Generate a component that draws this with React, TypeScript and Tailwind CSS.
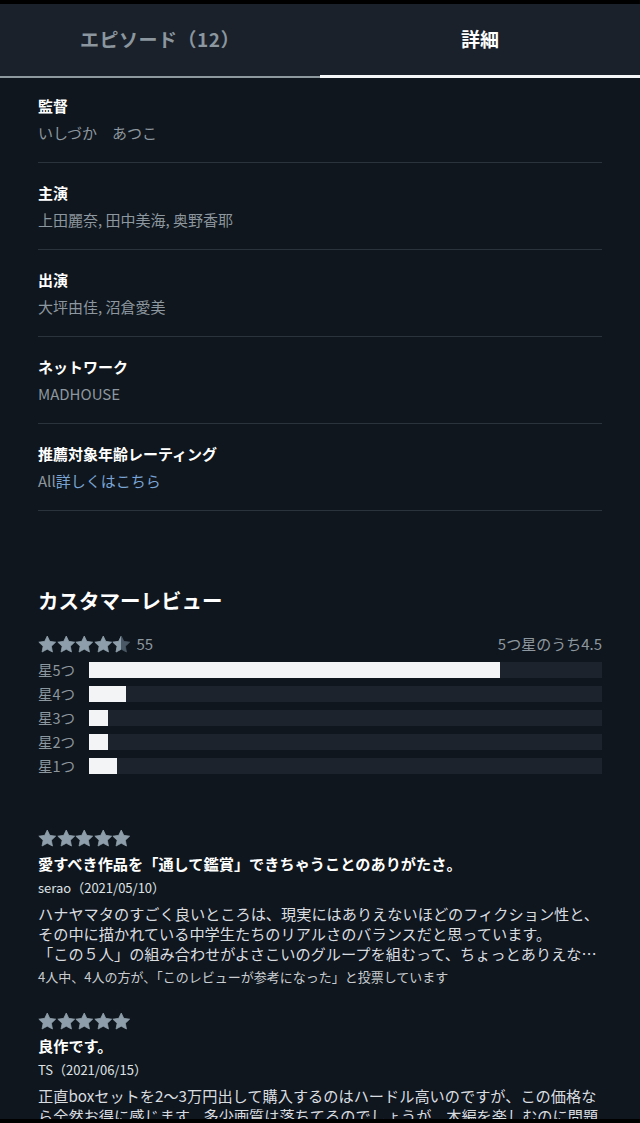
import React from "react";

const STAR =
  "M12 1.3L15.29 8.27L22.94 9.25L17.33 14.53L18.76 22.1L12 18.4L5.24 22.1L6.67 14.53L1.06 9.25L8.71 8.27Z";

function Star({ fill = "#8e9fab" }: { fill?: string }) {
  return (
    <svg viewBox="0 0 24 24" className="w-[18.5px] h-[18.5px] block" aria-hidden>
      <path d={STAR} fill={fill} stroke={fill} strokeWidth={1} strokeLinejoin="round" />
    </svg>
  );
}

function HalfStar() {
  return (
    <div className="relative w-[18.5px] h-[18.5px]">
      <Star fill="#4a5866" />
      <div className="absolute left-0 top-0 h-full w-[50%] overflow-hidden">
        <Star />
      </div>
    </div>
  );
}

function Stars({ half = false }: { half?: boolean }) {
  return (
    <div className="flex items-center">
      <Star />
      <Star />
      <Star />
      <Star />
      {half ? <HalfStar /> : <Star />}
    </div>
  );
}

const details: { label: string; value: React.ReactNode }[] = [
  { label: "監督", value: "いしづか　あつこ" },
  { label: "主演", value: "上田麗奈, 田中美海, 奥野香耶" },
  { label: "出演", value: "大坪由佳, 沼倉愛美" },
  { label: "ネットワーク", value: "MADHOUSE" },
  {
    label: "推薦対象年齢レーティング",
    value: (
      <>
        All<span className="text-[#7aa4d4]">詳しくはこちら</span>
      </>
    ),
  },
];

const bars = [
  { label: "星5つ", pct: 80.1 },
  { label: "星4つ", pct: 7.3 },
  { label: "星3つ", pct: 3.7 },
  { label: "星2つ", pct: 3.7 },
  { label: "星1つ", pct: 5.5 },
];

export default function App() {
  return (
    <div
      className="w-[640px] h-[1123px] overflow-hidden flex flex-col bg-[#0f161d]"
      style={{ fontFamily: '"Noto Sans CJK JP", "Noto Sans", sans-serif' }}
    >
      <div className="h-[4px] bg-black shrink-0" />
      {/* Tabs */}
      <div className="flex bg-[#1a212b] shrink-0">
        <div className="w-1/2 flex flex-col">
          <div className="h-[71px] flex items-center justify-center text-[19px] font-bold text-[#8b969e] tracking-[0.5px]">
            エピソード（12）
          </div>
          <div className="h-[3px] flex flex-col justify-end">
            <div className="h-[2px] bg-[#8e989f]" />
          </div>
        </div>
        <div className="w-1/2 flex flex-col">
          <div className="h-[71px] flex items-center justify-center text-[19px] font-bold text-white">
            詳細
          </div>
          <div className="h-[3px] bg-[#f4f6f7]" />
        </div>
      </div>

      <div className="flex-1 overflow-hidden px-[38px]">
        {details.map((d) => (
          <div key={d.label} className="pt-[20px] first:pt-[18px] pb-[19px] border-b border-[#2a323b]">
            <div className="text-[15px] leading-[20px] font-bold text-white">{d.label}</div>
            <div className="mt-[7px] text-[15px] leading-[20px] text-[#8d979f]">{d.value}</div>
          </div>
        ))}

        <div className="mt-[75px] text-[20.5px] leading-[28px] font-bold text-white">
          カスタマーレビュー
        </div>

        <div className="mt-[19px] flex items-center justify-between h-[22px]">
          <div className="flex items-center gap-[6px]">
            <Stars half />
            <span className="text-[15px] leading-[20px] text-[#8d979f]">55</span>
          </div>
          <span className="text-[15px] leading-[20px] text-[#8d979f]">5つ星のうち4.5</span>
        </div>

        <div className="mt-[7px] flex flex-col gap-[8px]">
          {bars.map((b) => (
            <div key={b.label} className="flex items-center h-[16px]">
              <span className="w-[51px] shrink-0 text-[14.5px] leading-[16px] text-[#8d979f]">
                {b.label}
              </span>
              <div className="flex-1 h-[16px] bg-[#1c232c]">
                <div className="h-full bg-[#f2f4f6]" style={{ width: `${b.pct}%` }} />
              </div>
            </div>
          ))}
        </div>

        {/* Review 1 */}
        <div className="mt-[55px]">
          <Stars />
          <div className="mt-[5px] text-[15.2px] leading-[20px] font-bold text-white">
            愛すべき作品を「通して鑑賞」できちゃうことのありがたさ。
          </div>
          <div className="mt-[6px] text-[13px] leading-[18px] text-[#dfe2e5]">serao（2021/05/10）</div>
          <div className="mt-[6px] text-[15.2px] leading-[20px] text-[#dadde0] whitespace-nowrap">
            <div>ハナヤマタのすごく良いところは、現実にはありえないほどのフィクション性と、</div>
            <div>その中に描かれている中学生たちのリアルさのバランスだと思っています。</div>
            <div>「この５人」の組み合わせがよさこいのグループを組むって、ちょっとありえな…</div>
          </div>
          <div className="mt-[5px] text-[13px] leading-[18px] text-[#c9cdd1]">
            4人中、4人の方が、「このレビューが参考になった」と投票しています
          </div>
        </div>

        {/* Review 2 */}
        <div className="mt-[26px]">
          <Stars />
          <div className="mt-[5px] text-[15.2px] leading-[20px] font-bold text-white">良作です。</div>
          <div className="mt-[6px] text-[13px] leading-[18px] text-[#dfe2e5]">TS（2021/06/15）</div>
          <div className="mt-[6px] text-[15.2px] leading-[20px] text-[#dadde0] whitespace-nowrap">
            <div>正直boxセットを2〜3万円出して購入するのはハードル高いのですが、この価格な</div>
            <div>ら全然お得に感じます。多少画質は落ちてるのでしょうが、本編を楽しむのに問題</div>
          </div>
        </div>
      </div>
      <div className="h-[4px] bg-black shrink-0" />
    </div>
  );
}
